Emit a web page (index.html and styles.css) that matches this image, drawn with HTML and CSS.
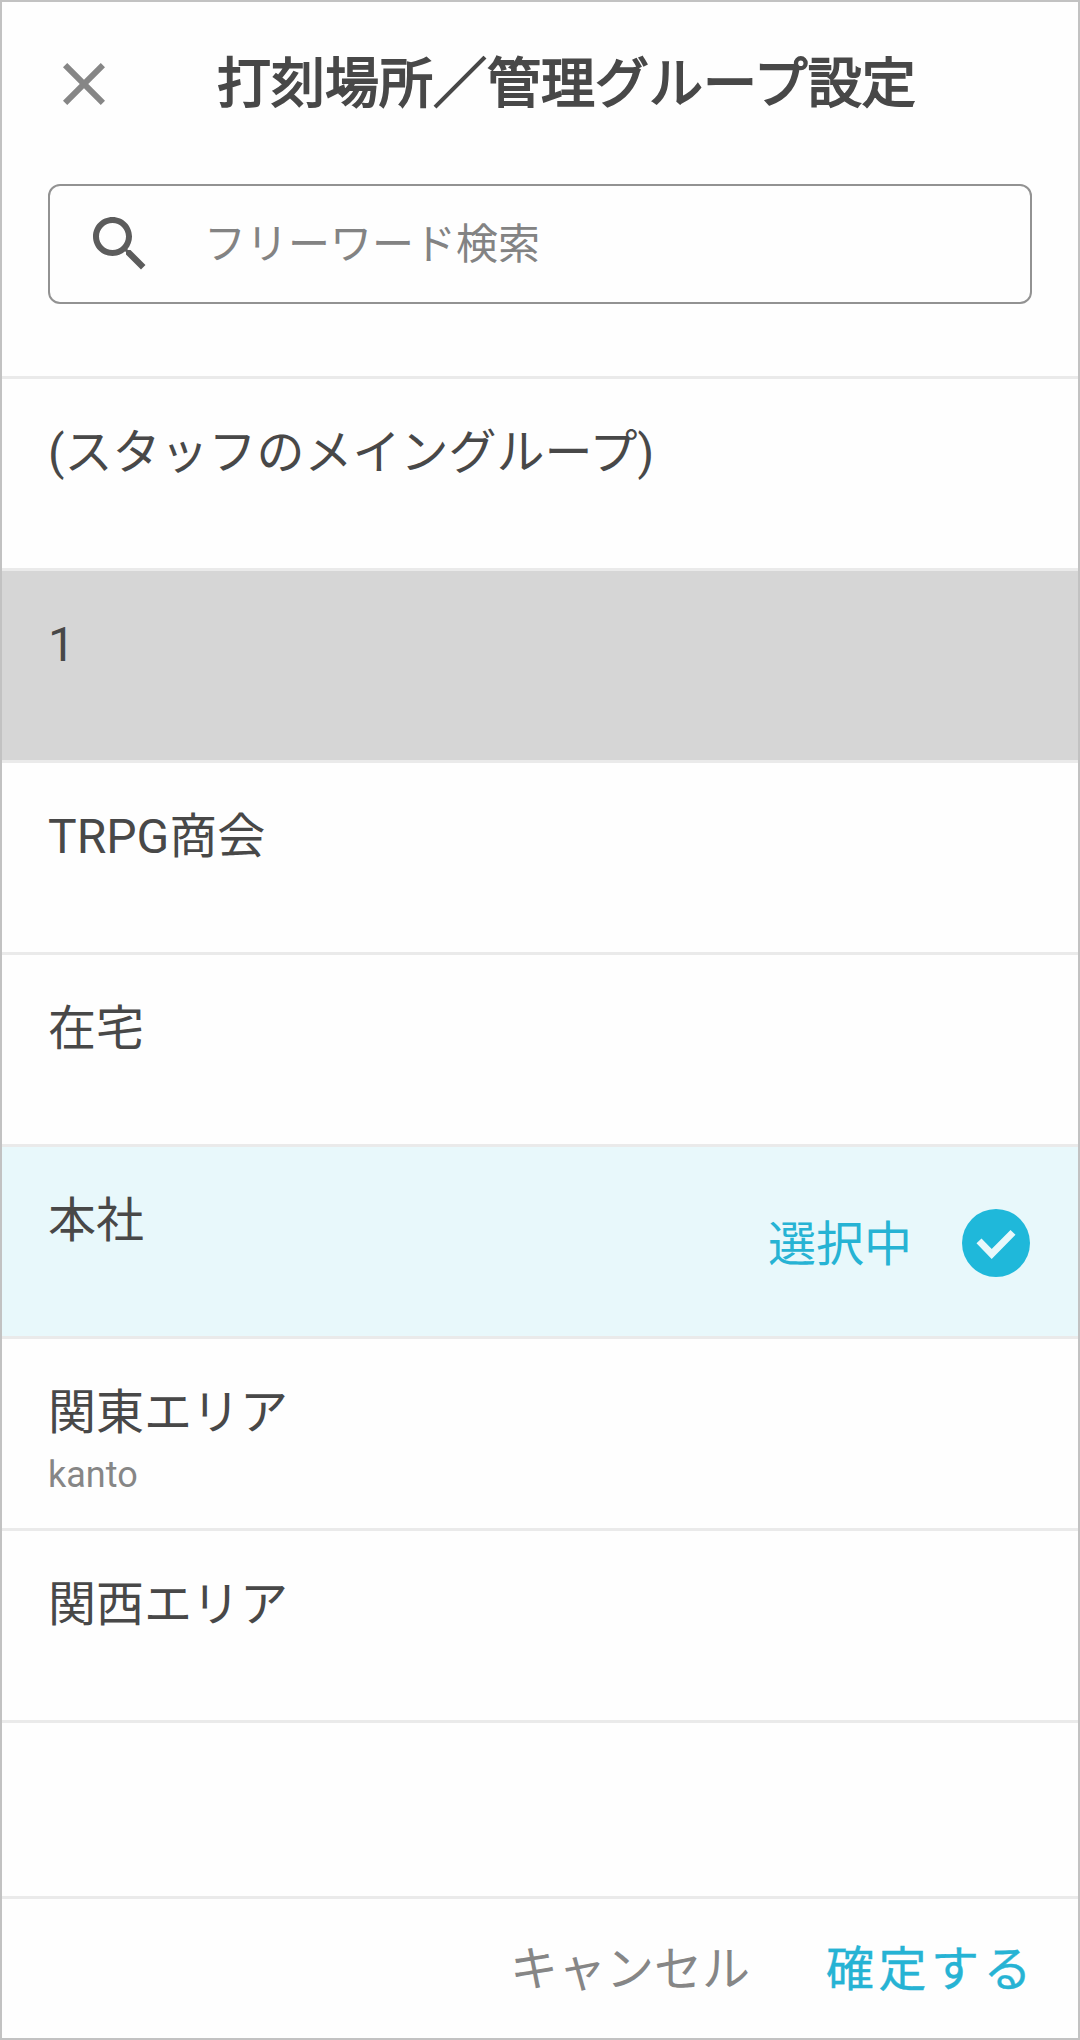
FILE: index.html
```html
<!DOCTYPE html>
<html lang="ja">
<head>
  <meta charset="UTF-8" />
  <meta name="viewport" content="width=device-width, initial-scale=1" />
  <title>打刻場所／管理グループ設定</title>
  <link rel="stylesheet" href="styles.css">
</head>
<body>
  <div class="dialog">
    <header class="header">
      <button class="close" type="button" aria-label="閉じる">
        <svg viewBox="0 0 24 24"><path d="M19 6.41L17.59 5 12 10.59 6.41 5 5 6.41 10.59 12 5 17.59 6.41 19 12 13.41 17.59 19 19 17.59 13.41 12z"/></svg>
      </button>
      <h1>打刻場所／管理グループ設定</h1>
    </header>

    <div class="search">
      <svg class="search-icon" viewBox="0 0 24 24"><path d="M15.5 14h-.79l-.28-.27C15.41 12.59 16 11.11 16 9.5 16 5.91 13.09 3 9.5 3S3 5.91 3 9.5 5.91 16 9.5 16c1.61 0 3.09-.59 4.23-1.57l.27.28v.79l5 4.99L20.49 19l-4.99-5zm-6 0C7.01 14 5 11.99 5 9.5S7.01 5 9.5 5 14 7.01 14 9.5 11.99 14 9.5 14z"/></svg>
      <input type="text" placeholder="フリーワード検索">
    </div>

    <ul class="list">
      <li class="item"><div class="name">(スタッフのメイングループ)</div></li>
      <li class="item pressed"><div class="name">1</div></li>
      <li class="item"><div class="name">TRPG商会</div></li>
      <li class="item"><div class="name">在宅</div></li>
      <li class="item selected">
        <div class="name">本社</div>
        <div class="status">
          <span>選択中</span>
          <svg class="check" viewBox="0 0 68 68">
            <circle cx="34" cy="34" r="34"/>
            <path d="M17 31.9L29.7 45 51 23.4"/>
          </svg>
        </div>
      </li>
      <li class="item">
        <div>
          <div class="name">関東エリア</div>
          <div class="code">kanto</div>
        </div>
      </li>
      <li class="item"><div class="name">関西エリア</div></li>
    </ul>

    <footer class="footer">
      <button class="cancel" type="button">キャンセル</button>
      <button class="submit" type="button">確定する</button>
    </footer>
  </div>
</body>
</html>
```

FILE: styles.css
```css
* {
  margin: 0;
  padding: 0;
  box-sizing: border-box;
}
body {
  background: #fefefe;
  font-family: Roboto, "Noto Sans CJK JP", sans-serif;
  color: #484848;
}
button {
  border: none;
  background: none;
  font-family: inherit;
}
.dialog {
  display: flex;
  flex-direction: column;
  height: 2040px;
  border: 2px solid #c2c2c2;
}

/* Header */
.header {
  display: flex;
  align-items: center;
  height: 164px;
  padding: 0 46px;
}
.close {
  width: 72px;
  height: 72px;
}
.close svg {
  display: block;
  fill: #868686;
}
h1 {
  margin: 2px 0 0 97px;
  font-size: 54px;
  font-weight: 400;
  line-height: 72px;
  white-space: nowrap;
  -webkit-text-stroke: 1.8px #484848;
}

/* Search */
.search {
  display: flex;
  align-items: center;
  height: 120px;
  margin: 18px 46px 72px;
  padding-left: 34px;
  border: 2px solid #929292;
  border-radius: 12px;
}
.search-icon {
  width: 72px;
  height: 72px;
  fill: #5c5c5c;
}
.search input {
  flex: 1;
  min-width: 0;
  height: 100%;
  margin-left: 48px;
  border: none;
  outline: none;
  background: none;
  font-family: inherit;
  font-size: 42px;
}
.search input::placeholder {
  color: #838383;
}

/* Group list */
.list {
  flex: 1;
  list-style: none;
}
.item {
  display: flex;
  justify-content: space-between;
  height: 192px;
  padding: 42px 48px 0 46px;
  border-top: 3px solid #eaeaea;
}
.item:last-child {
  height: 195px;
  border-bottom: 3px solid #eaeaea;
}
.pressed {
  background: #d6d6d6;
}
.selected {
  background: #e8f8fb;
}
.name {
  font-size: 48px;
  line-height: 64px;
}
.code {
  margin-top: 6px;
  color: #868686;
  font-size: 36px;
  line-height: 48px;
}
.status {
  display: flex;
  align-items: center;
  height: 108px;
  gap: 50px;
  color: #26b3d4;
  font-size: 48px;
}
.status span {
  padding-bottom: 7px;
}
.check {
  width: 68px;
  height: 68px;
}
.check circle {
  fill: #1fb8da;
}
.check path {
  fill: none;
  stroke: #e8f8fb;
  stroke-width: 7;
}

/* Footer */
.footer {
  display: flex;
  justify-content: flex-end;
  height: 142px;
  padding: 0 42px 8px;
  gap: 76px;
  border-top: 3px solid #eaeaea;
}
.footer button {
  font-size: 48px;
}
.cancel {
  color: #868686;
}
.submit {
  color: #26b3d4;
  letter-spacing: 4.5px;
  -webkit-text-stroke: 0.4px #26b3d4;
}
```
